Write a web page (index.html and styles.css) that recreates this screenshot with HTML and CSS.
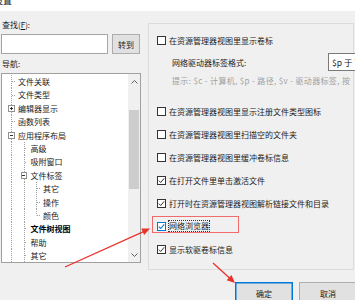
FILE: index.html
```html
<!DOCTYPE html>
<html lang="zh">

<head>
  <meta charset="UTF-8">
  <meta name="viewport" content="width=device-width, initial-scale=1.0">
  <title>设置</title>
  <link rel="stylesheet" href="styles.css">
</head>

<body>
  <div class="window">
    <div class="titlebar"><span class="title">设置</span></div>

    <div class="main">
      <!-- 左侧：查找 + 导航树 -->
      <div class="sidebar">
        <div class="label">查找(<u>F</u>):</div>
        <div class="find-row">
          <div class="textbox"></div>
          <div class="btn goto">转到</div>
        </div>
        <div class="label nav">导航:</div>
        <div class="tree">
          <div class="tree-items">
            <div class="node"><span class="joint"></span><span class="text">文件关联</span></div>
            <div class="node"><span class="joint"></span><span class="text">文件类型</span></div>
            <div class="node"><span class="joint"><span class="exp plus"></span></span><span class="text">编辑器显示</span></div>
            <div class="node"><span class="joint"></span><span class="text">函数列表</span></div>
            <div class="node"><span class="joint"><span class="exp"></span></span><span class="text">应用程序布局</span></div>
            <div class="node"><span class="indent"></span><span class="joint"></span><span class="text">高级</span></div>
            <div class="node"><span class="indent"></span><span class="joint"></span><span class="text">吸附窗口</span></div>
            <div class="node"><span class="indent"></span><span class="joint"><span class="exp"></span></span><span class="text">文件标签</span></div>
            <div class="node"><span class="indent"></span><span class="indent"></span><span class="joint"></span><span class="text">其它</span></div>
            <div class="node"><span class="indent"></span><span class="indent"></span><span class="joint"></span><span class="text">操作</span></div>
            <div class="node"><span class="indent"></span><span class="indent"></span><span class="joint last"></span><span class="text">颜色</span></div>
            <div class="node"><span class="indent"></span><span class="joint"></span><span class="text selected">文件树视图</span></div>
            <div class="node"><span class="indent"></span><span class="joint"></span><span class="text">帮助</span></div>
            <div class="node"><span class="indent"></span><span class="joint"></span><span class="text">其它</span></div>
          </div>
          <div class="scrollbar">
            <div class="arrow up">
              <svg width="7" height="4" viewBox="0 0 7 4"><polyline points="0.5,3.5 3.5,0.5 6.5,3.5" fill="none" stroke="#606060" stroke-width="1" /></svg>
            </div>
            <div class="track"><div class="thumb"></div></div>
            <div class="arrow down">
              <svg width="7" height="4" viewBox="0 0 7 4"><polyline points="0.5,0.5 3.5,3.5 6.5,0.5" fill="none" stroke="#606060" stroke-width="1" /></svg>
            </div>
          </div>
        </div>
      </div>

      <!-- 右侧：文件树视图选项 -->
      <div class="panel">
        <div class="check"><span class="box"></span>在资源管理器视图里显示卷标</div>
        <div class="drive-row">
          <span class="drive-label">网络驱动器标签格式:</span>
          <div class="field">$p 于 '</div>
        </div>
        <div class="hint">提示: $c - 计算机, $p - 路径, $v - 驱动器标签, 按</div>
        <div class="checks">
          <div class="check"><span class="box"></span>在资源管理器视图里显示注册文件类型图标</div>
          <div class="check"><span class="box"></span>在资源管理器视图里扫描空的文件夹</div>
          <div class="check"><span class="box"></span>在资源管理器视图里缓冲卷标信息</div>
          <div class="check"><span class="box"><svg width="7" height="7" viewBox="0 0 7 7"><polyline points="0.8,3.6 2.7,5.5 6.2,1.3" fill="none" stroke="#333" stroke-width="1" /></svg></span>在打开文件里单击激活文件</div>
          <div class="check"><span class="box"><svg width="7" height="7" viewBox="0 0 7 7"><polyline points="0.8,3.6 2.7,5.5 6.2,1.3" fill="none" stroke="#333" stroke-width="1" /></svg></span>打开时在资源管理器视图解析链接文件和目录</div>
          <div class="check focused"><span class="box"><svg width="7" height="7" viewBox="0 0 7 7"><polyline points="0.8,3.6 2.7,5.5 6.2,1.3" fill="none" stroke="#0078d7" stroke-width="1.1" /></svg></span><span class="focus-text">网络浏览器</span></div>
          <div class="check"><span class="box"><svg width="7" height="7" viewBox="0 0 7 7"><polyline points="0.8,3.6 2.7,5.5 6.2,1.3" fill="none" stroke="#333" stroke-width="1" /></svg></span>显示软驱卷标信息</div>
        </div>
      </div>
    </div>

    <div class="footer">
      <div class="btn default">确定</div>
      <div class="btn">取消</div>
    </div>

    <!-- 标注：红框和箭头 -->
    <svg class="annotations" width="355" height="300" viewBox="0 0 355 300">
      <rect x="152.5" y="216.5" width="86" height="16" fill="none" stroke="#f26b6b" stroke-width="1" />
      <line x1="65" y1="267" x2="143" y2="231.8" stroke="#e8322c" stroke-width="1.3" />
      <polygon points="150,228.5 144.1,235 141.3,228.6" fill="#e8322c" />
      <line x1="213" y1="263" x2="229.5" y2="278" stroke="#e8322c" stroke-width="1.3" />
      <polygon points="235,283 226.7,280.2 231.5,275" fill="#e8322c" />
    </svg>
  </div>
</body>

</html>
```

FILE: styles.css
```css
body {
  margin: 0;
  font-family: "Noto Sans CJK SC", "Microsoft YaHei", sans-serif;
  font-size: 8px;
  color: #1a1a1a;
  background: #f0f0f0;
}

.window {
  position: relative;
  width: 355px;
  height: 300px;
  overflow: hidden;
  background: #f0f0f0;
}

.titlebar {
  height: 11px;
  background: #fff;
  overflow: hidden;
}

.title {
  display: block;
  font-size: 9px;
  line-height: 9px;
  margin: -4px 0 0 -6px;
}

.main {
  display: flex;
  align-items: flex-start;
  gap: 7px;
}

/* 左侧 */
.sidebar {
  width: 140px;
  padding: 8px 0 0 1px;
}

.label {
  line-height: 12px;
  height: 12px;
  padding-left: 1px;
}

.label.nav {
  margin-top: 4px;
}

.find-row {
  display: flex;
  gap: 4px;
  margin-top: 3px;
}

.textbox {
  width: 107px;
  height: 20px;
  box-sizing: border-box;
  border: 1px solid #a5a5a5;
  background: #fff;
}

.btn {
  display: flex;
  align-items: center;
  justify-content: center;
  box-sizing: border-box;
  border: 1px solid #adadad;
  background: #e1e1e1;
}

.btn.goto {
  width: 28px;
  height: 20px;
}

.tree {
  display: flex;
  margin-top: 3px;
  height: 190px;
  box-sizing: border-box;
  border: 1px solid #a0a0a0;
  background: #fff;
  overflow: hidden;
}

.tree-items {
  flex: 1;
  padding-top: 1px;
}

.node {
  display: flex;
  height: 13.4px;
  line-height: 13.4px;
}

.indent,
.joint {
  flex: none;
  width: 12.5px;
}

.indent {
  background: repeating-linear-gradient(to bottom, #a0a0a0 0 1px, transparent 1px 2px) 9px 0 / 1px 100% no-repeat;
}

.joint {
  display: flex;
  align-items: center;
  background:
    repeating-linear-gradient(to bottom, #a0a0a0 0 1px, transparent 1px 2px) 9px 0 / 1px 100% no-repeat,
    repeating-linear-gradient(to right, #a0a0a0 0 1px, transparent 1px 2px) 10px 50% / 5px 1px no-repeat;
}

.joint.last {
  background-size: 1px 50%, 5px 1px;
}

.exp {
  margin-left: 6px;
  width: 7px;
  height: 7px;
  box-sizing: border-box;
  border: 1px solid #919191;
  background: linear-gradient(#333, #333) center / 3px 1px no-repeat, #fff;
}

.exp.plus {
  background:
    linear-gradient(#333, #333) center / 3px 1px no-repeat,
    linear-gradient(#333, #333) center / 1px 3px no-repeat,
    #fff;
}

.text {
  margin-left: 3.5px;
  white-space: nowrap;
}

.text.selected {
  font-weight: bold;
  color: #000;
}

.scrollbar {
  display: flex;
  flex-direction: column;
  width: 12px;
  background: #f0f0f0;
}

.arrow {
  display: flex;
  align-items: center;
  justify-content: center;
}

.arrow.up {
  height: 15px;
}

.arrow.down {
  height: 14px;
}

.track {
  flex: 1;
}

.thumb {
  margin: 21px 1px 0;
  height: 79px;
  background: #cdcdcd;
}

/* 右侧面板 */
.panel {
  margin-top: 12px;
  width: 206px;
  height: 247px;
  box-sizing: border-box;
  border: 1px solid #dcdcdc;
  padding: 10px 0 0 8px;
}

.check {
  display: flex;
  align-items: center;
  gap: 3px;
  height: 12px;
  white-space: nowrap;
}

.box {
  display: flex;
  align-items: center;
  justify-content: center;
  width: 9px;
  height: 9px;
  box-sizing: border-box;
  border: 1px solid #333;
  background: #fff;
}

.check.focused .box {
  border-color: #0078d7;
}

.focus-text {
  outline: 1px dotted #333;
  line-height: 10px;
}

.drive-row {
  display: flex;
  align-items: center;
  margin-top: 7px;
  padding-left: 15px;
  height: 18px;
}

.drive-label {
  width: 156px;
  flex: none;
}

.field {
  flex: none;
  width: 40px;
  height: 18px;
  box-sizing: border-box;
  border: 1px solid #7a7a7a;
  background: #fff;
  padding-left: 3px;
  line-height: 16px;
  font-size: 8.5px;
  white-space: nowrap;
}

.hint {
  margin-top: 4px;
  padding-left: 15px;
  line-height: 12px;
  letter-spacing: 0.35px;
  color: #a0a0a0;
  white-space: nowrap;
}

.checks {
  display: flex;
  flex-direction: column;
  gap: 11px;
  margin-top: 18px;
}

/* 底部按钮 */
.footer {
  display: flex;
  gap: 6px;
  margin-top: 12px;
  padding-left: 235px;
}

.footer .btn {
  flex: none;
  width: 58px;
  height: 22px;
}

.footer .btn.default {
  border-color: #0078d7;
  box-shadow: inset 0 0 0 0.5px #0078d7;
}

.annotations {
  position: absolute;
  top: 0;
  left: 0;
  pointer-events: none;
}
```
